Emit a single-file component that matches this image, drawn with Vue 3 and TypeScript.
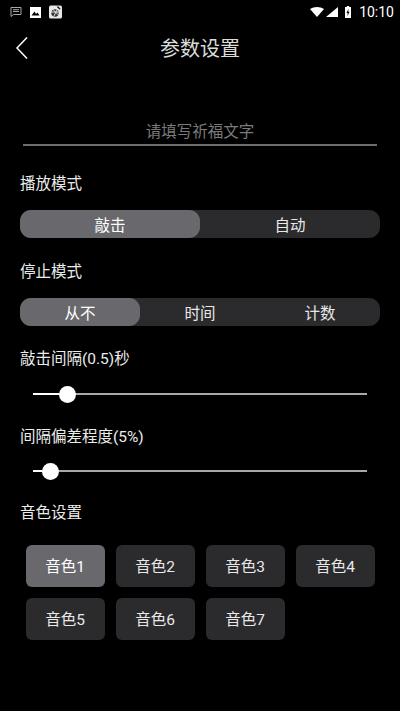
<script setup lang="ts">
const playModes = [
  { label: '敲击', active: true },
  { label: '自动', active: false },
]
const stopModes = [
  { label: '从不', active: true },
  { label: '时间', active: false },
  { label: '计数', active: false },
]
const tones = ['音色1', '音色2', '音色3', '音色4', '音色5', '音色6', '音色7']
</script>

<template>
  <div class="page">
    <div class="status">
      <div class="status-left">
        <svg width="12" height="12" viewBox="0 0 12 12" fill="none" stroke="#a8a8a8" stroke-width="1"><path d="M1 1.500H11V8.500H3.500L1 10.500Z" /><path d="M3 3.700H9M3 5.500H9" /></svg>
        <svg width="11" height="11" viewBox="0 0 11 11"><path fill="#fff" fill-rule="evenodd" d="M0 0H11V11H0ZM1.500 8.500H9.500L7.500 5.500L6 7L4.500 4.500Z" /></svg>
        <svg width="13" height="14" viewBox="0 0 14 14"><rect width="14" height="14" rx="2" fill="#e8e8e8" /><circle cx="6.500" cy="8" r="4" fill="#333" /><path d="M3 3L11 11M10 2L5 12M1 7H11" stroke="#eee" stroke-width="1" /><path d="M9 1L12 4" stroke="#222" stroke-width="1.500" /></svg>
      </div>
      <div class="status-right">
        <svg width="14" height="10" viewBox="0 0 16 12" preserveAspectRatio="none"><path fill="#fff" d="M0 2.500C4.500 -0.800 11.500 -0.800 16 2.500L8 12Z" /></svg>
        <svg width="12" height="10" viewBox="0 0 12 12" preserveAspectRatio="none"><path fill="#fff" d="M12 0V12H0Z" /></svg>
        <svg class="battery" width="6" height="12" viewBox="0 0 8 13" preserveAspectRatio="none"><path fill="#fff" fill-rule="evenodd" d="M2.500 0H5.500V1H8V13H0V1H2.500ZM4.800 3L2 7.500H3.700L3.200 11L6 6.300H4.300Z" /></svg>
        <span class="clock">10:10</span>
      </div>
    </div>

    <header class="header">
      <svg class="back" width="14" height="24" viewBox="0 0 14 24" fill="none" stroke="#fff" stroke-width="1.500"><path d="M12 1.500L2 12L12 22.500" /></svg>
      <h1 class="title">参数设置</h1>
    </header>

    <div class="wish">请填写祈福文字</div>

    <main class="content">
      <p class="label play-label">播放模式</p>
      <div class="segment">
        <div v-for="m in playModes" :key="m.label" class="seg-item" :class="{ on: m.active }">{{ m.label }}</div>
      </div>

      <p class="label stop-label">停止模式</p>
      <div class="segment">
        <div v-for="m in stopModes" :key="m.label" class="seg-item" :class="{ on: m.active }">{{ m.label }}</div>
      </div>

      <p class="label interval-label">敲击间隔(0.5)秒</p>
      <div class="slider">
        <div class="fill interval-fill"></div>
        <div class="track"></div>
        <div class="thumb interval-thumb"></div>
      </div>

      <p class="label dev-label">间隔偏差程度(5%)</p>
      <div class="slider dev-slider">
        <div class="fill dev-fill"></div>
        <div class="track"></div>
        <div class="thumb dev-thumb"></div>
      </div>

      <p class="label tone-label">音色设置</p>
      <div class="tones">
        <div v-for="(t, i) in tones" :key="t" class="tone" :class="{ on: i === 0 }">{{ t }}</div>
      </div>
    </main>
  </div>
</template>

<style>
html, body { margin: 0; background: #000; }
</style>

<style scoped>
.page {
  width: 400px;
  height: 711px;
  overflow: hidden;
  background: #000;
  color: #fff;
  font-family: Roboto, "Noto Sans CJK SC", sans-serif;
}
.status {
  height: 24px;
  display: flex;
  justify-content: space-between;
  align-items: center;
  padding: 0 6px 0 10px;
}
.status-left { display: flex; align-items: center; gap: 8px; }
.status-right { display: flex; align-items: center; gap: 2px; }
.battery { margin: 0 6px 0 5px; }
.clock { font-size: 14px; color: #fff; }
.header {
  position: relative;
  height: 48px;
  display: flex;
  align-items: center;
  justify-content: center;
  box-sizing: border-box;
  padding-bottom: 2px;
}
.back { position: absolute; left: 15px; top: 12px; }
.title { margin: 0; font-size: 20px; font-weight: 400; color: #dcdcdc; }
.wish {
  margin: 46px 23px 0;
  height: 26px;
  line-height: 28px;
  font-size: 15.500px;
  text-align: center;
  color: #7a7a7a;
  border-bottom: 2px solid #6e6e6e;
}
.content { padding: 0 20px; }
.label {
  margin: 0;
  font-size: 15.500px;
  line-height: 22px;
  color: #ececec;
}
.play-label { margin-top: 27px; }
.stop-label { margin-top: 23px; }
.interval-label { margin-top: 22px; }
.dev-label { margin-top: 23px; }
.tone-label { margin-top: 22px; }
.segment {
  margin-top: 15px;
  height: 28px;
  display: flex;
  border-radius: 11px;
  background: #2b2b2d;
}
.seg-item {
  flex: 1;
  display: flex;
  align-items: center;
  justify-content: center;
  box-sizing: border-box;
  padding-bottom: 1px;
  border-radius: 11px;
  font-size: 15.500px;
  color: #e8e8e8;
}
.seg-item.on { background: #69696d; color: #fff; }
.slider {
  position: relative;
  height: 18px;
  margin: 15px 13px 0;
  display: flex;
  align-items: center;
}
.dev-slider { margin-top: 14px; }
.track { flex: 1; height: 2px; background: #a8a8a8; }
.fill { height: 2px; background: #fff; }
.interval-fill { width: 34px; }
.dev-fill { width: 17px; }
.thumb {
  position: absolute;
  top: 0.500px;
  width: 17px;
  height: 17px;
  border-radius: 50%;
  background: #fff;
}
.interval-thumb { left: 25.500px; }
.dev-thumb { left: 8.700px; }
.tones {
  margin: 21px 5px 0 5.500px;
  display: grid;
  grid-template-columns: repeat(4, 79px);
  grid-auto-rows: 42px;
  column-gap: 11px;
  row-gap: 11px;
}
.tone {
  display: flex;
  align-items: center;
  justify-content: center;
  box-sizing: border-box;
  padding-bottom: 2px;
  border-radius: 6px;
  background: #2b2b2d;
  font-size: 15.500px;
  color: #e8e8e8;
}
.tone.on { background: #69696d; color: #fff; }
</style>
